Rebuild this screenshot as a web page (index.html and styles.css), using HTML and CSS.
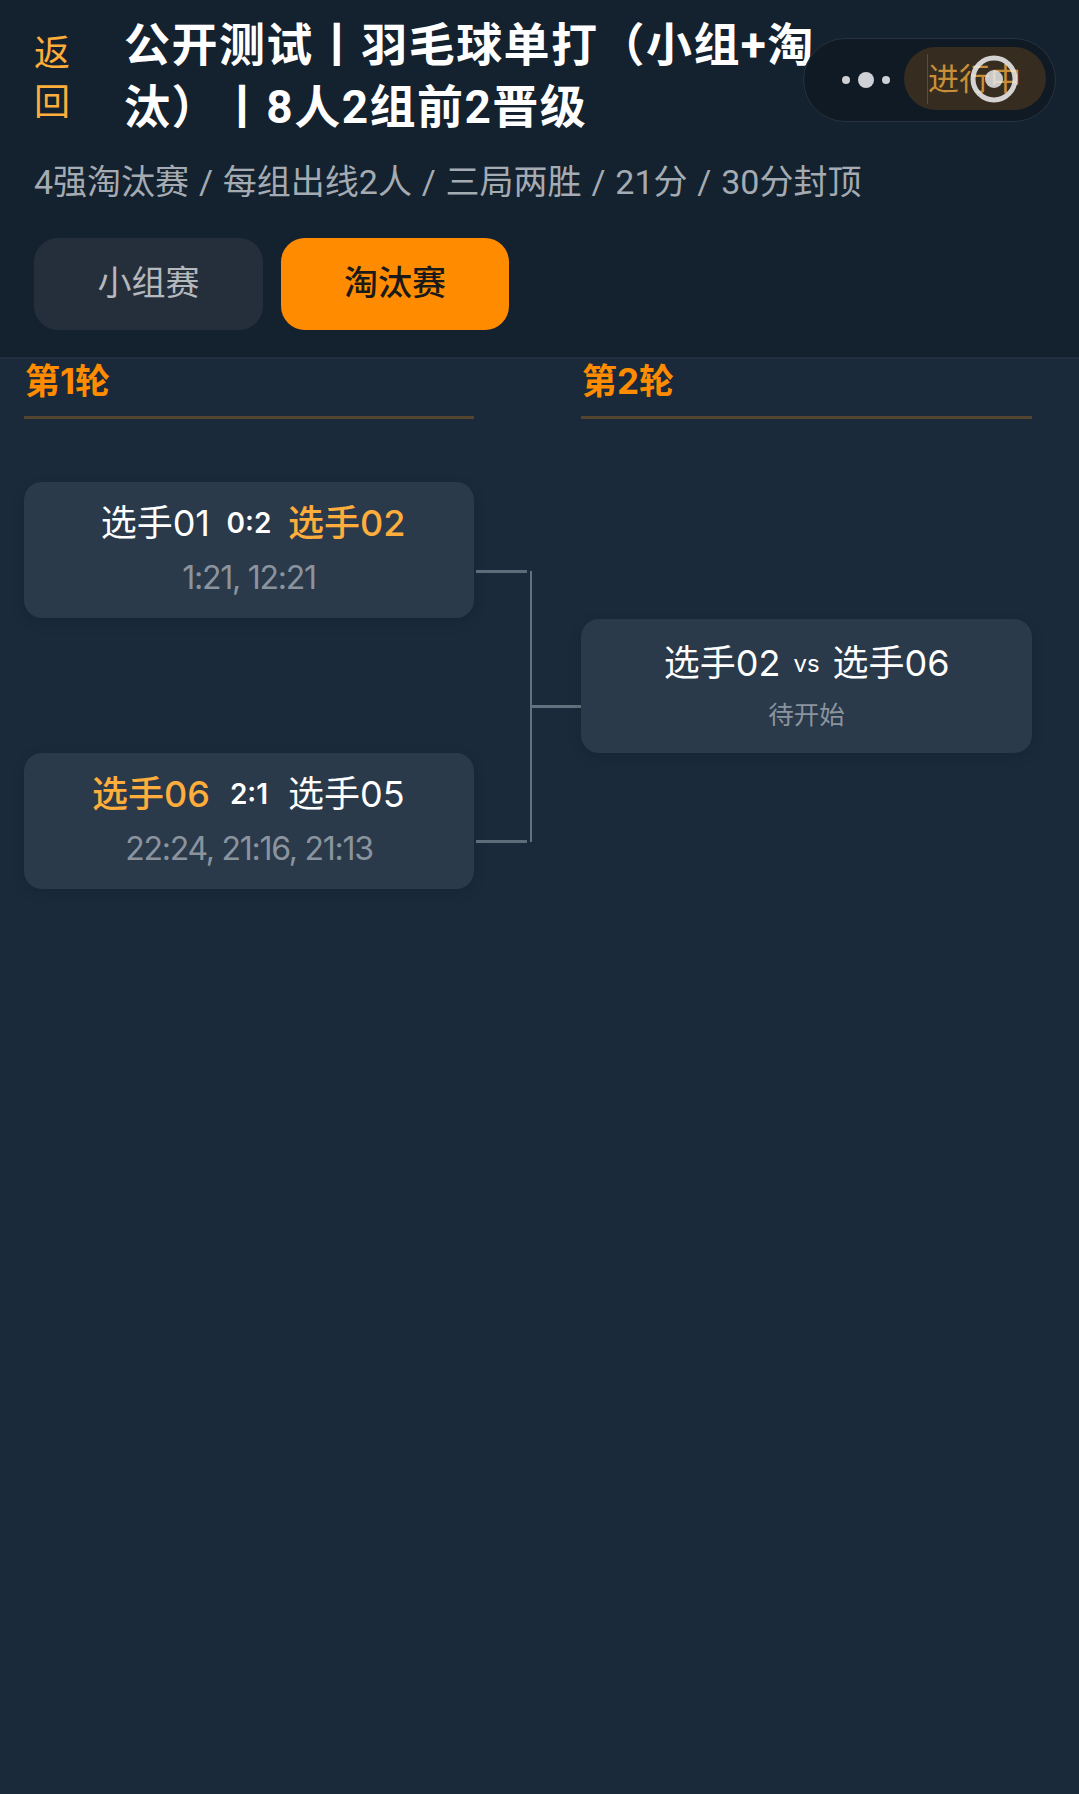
FILE: index.html
```html
<!DOCTYPE html>
<html>

<head>
  <title>淘汰赛</title>
  <link rel="stylesheet" href="styles.css">
</head>

<body>
  <header class="top">
    <div class="top_row">
      <a class="back">返回</a>
      <h1 class="title">公开测试丨羽毛球单打（小组+淘汰）丨8人2组前2晋级</h1>
    </div>
    <p class="sub">4强淘汰赛 / 每组出线2人 / 三局两胜 / 21分 / 30分封顶</p>
    <nav class="tabs">
      <a class="tab">小组赛</a>
      <a class="tab active">淘汰赛</a>
    </nav>
  </header>

  <div class="capsule">
    <div class="dots"><i></i><i class="big"></i><i></i></div>
    <div class="status">
      <span class="status_text">进行中</span>
      <svg class="target" width="54" height="54" viewBox="0 0 54 54">
        <circle cx="27" cy="27" r="21" fill="none" stroke="#e6e6e6" stroke-width="5" opacity="0.9" />
        <circle cx="27" cy="27" r="9" fill="#e6e6e6" opacity="0.85" />
      </svg>
    </div>
  </div>

  <main class="bracket">
    <section class="round">
      <h2 class="round_name">第1轮</h2>
      <div class="match first">
        <div class="players">
          <span class="name left">选手01</span><span class="score">0:2</span><span class="name win">选手02</span>
        </div>
        <p class="detail">1:21, 12:21</p>
      </div>
      <div class="match second">
        <div class="players">
          <span class="name left win">选手06</span><span class="score">2:1</span><span class="name">选手05</span>
        </div>
        <p class="detail">22:24, 21:16, 21:13</p>
      </div>
    </section>

    <div class="joint">
      <div class="stubs"><i></i><i></i></div>
      <div class="spine"></div>
      <div class="out"></div>
    </div>

    <section class="round last">
      <h2 class="round_name">第2轮</h2>
      <div class="match final">
        <div class="players pending">
          <span class="name left">选手02</span><span class="vs">vs</span><span class="name">选手06</span>
        </div>
        <p class="detail wait">待开始</p>
      </div>
    </section>
  </main>
</body>

</html>
```

FILE: styles.css
```css
* {
  box-sizing: border-box;
}

html {
  height: 100%;
}

body {
  margin: 0;
  min-height: 100%;
  position: relative;
  background-color: #1a2a3a;
  color: #fff;
  font-family: "Inter", "Noto Sans CJK SC", sans-serif;
}

p,
h1,
h2 {
  margin: 0;
}

/* HEADER */
.top {
  height: 359px;
  padding: 14px 0 0 34px;
  background-color: #14212e;
  border-bottom: 2px solid #212f3e;
}

.top_row {
  display: flex;
  align-items: center;
}

.back {
  width: 36px;
  padding-top: 4px;
  font-size: 36px;
  line-height: 49px;
  color: #ffad3b;
}

.title {
  width: 700px;
  margin-left: 54px;
  font-family: "Roboto", "Noto Sans CJK SC", sans-serif;
  font-size: 46px;
  line-height: 62px;
  font-weight: 700;
  letter-spacing: 1.45px;
}

.sub {
  margin-top: 19px;
  font-family: "Roboto", "Noto Sans CJK SC", sans-serif;
  font-size: 34px;
  line-height: 50px;
  word-spacing: 1.4px;
  color: #a4abb2;
}

.tabs {
  display: flex;
  gap: 18px;
  margin-top: 31px;
}

.tab {
  width: 229px;
  height: 92px;
  border-radius: 24px;
  background-color: #252f3c;
  color: #b5b9be;
  font-size: 34px;
  line-height: 90px;
  text-align: center;
}

.tab.active {
  width: 228px;
  background-color: #ff8c00;
  color: #1a1a1a;
  font-weight: 500;
}

/* CAPSULE */
.capsule {
  position: absolute;
  top: 38px;
  left: 803px;
  width: 253px;
  height: 84px;
  display: flex;
  align-items: center;
  padding-left: 38px;
  background-color: #0f1a24;
  border: 1px solid #26323f;
  border-radius: 42px;
}

.dots {
  display: flex;
  align-items: center;
  gap: 8px;
}

.dots i {
  width: 8px;
  height: 8px;
  border-radius: 50%;
  background-color: #ced1d6;
}

.dots i.big {
  width: 16px;
  height: 16px;
}

.status {
  position: absolute;
  left: 100px;
  top: 8px;
  width: 142px;
  height: 63px;
  padding-left: 23px;
  padding-top: 7px;
  border-radius: 32px;
  background-color: #372c20;
  color: #c98f38;
  font-size: 31px;
}

.status_text {
  display: block;
  border-left: 1px solid #5a4d3c;
  height: 50px;
  line-height: 50px;
}

.target {
  position: absolute;
  left: 63px;
  top: 5px;
}

/* BRACKET */
.bracket {
  display: flex;
  align-items: flex-start;
  padding-left: 24px;
}

.round {
  width: 450px;
}

.round.last {
  width: 451px;
}

.round_name {
  height: 60px;
  padding-left: 1px;
  border-bottom: 3px solid #54452f;
  color: #ff8c00;
  font-size: 35px;
  line-height: 44px;
  font-weight: 700;
}

.match {
  background-color: #2a3a4b;
  border-radius: 18px;
  box-shadow: 0 4px 14px #0000001f;
  text-align: center;
}

.match.first {
  height: 136px;
  margin-top: 63px;
  padding-top: 17px;
}

.match.second {
  height: 136px;
  margin-top: 135px;
  padding-top: 17px;
}

.match.final {
  height: 134px;
  margin-top: 200px;
  padding-top: 20px;
}

.players {
  display: grid;
  grid-template-columns: 1fr 78px 1fr;
  align-items: center;
  height: 48px;
  text-align: left;
}

.players.pending {
  grid-template-columns: 1fr 52px 1fr;
}

.name {
  font-size: 36px;
  line-height: 48px;
}

.name.left {
  justify-self: end;
}

.name.win {
  color: #ffad3b;
  font-weight: 500;
}

.score {
  font-size: 28px;
  font-weight: 600;
  text-align: center;
}

.vs {
  font-size: 24px;
  text-align: center;
}

.detail {
  margin-top: 9px;
  font-size: 32px;
  line-height: 44px;
  letter-spacing: -1.25px;
  color: #8b949e;
}

.detail.wait {
  margin-top: 9px;
  font-size: 25.5px;
  line-height: 38px;
  letter-spacing: 0;
}

.joint {
  display: flex;
  width: 107px;
  height: 273px;
  margin-top: 211px;
}

.stubs {
  display: flex;
  flex-direction: column;
  justify-content: space-between;
  width: 51px;
  height: 273px;
  margin-left: 2px;
}

.stubs i {
  display: block;
  height: 3px;
  background-color: #5e6b78;
}

.spine {
  width: 2px;
  height: 271px;
  margin: 1px 0 0 3px;
  background-color: #64717e;
}

.out {
  width: 49px;
  height: 3px;
  align-self: center;
  background-color: #64717e;
}
```
